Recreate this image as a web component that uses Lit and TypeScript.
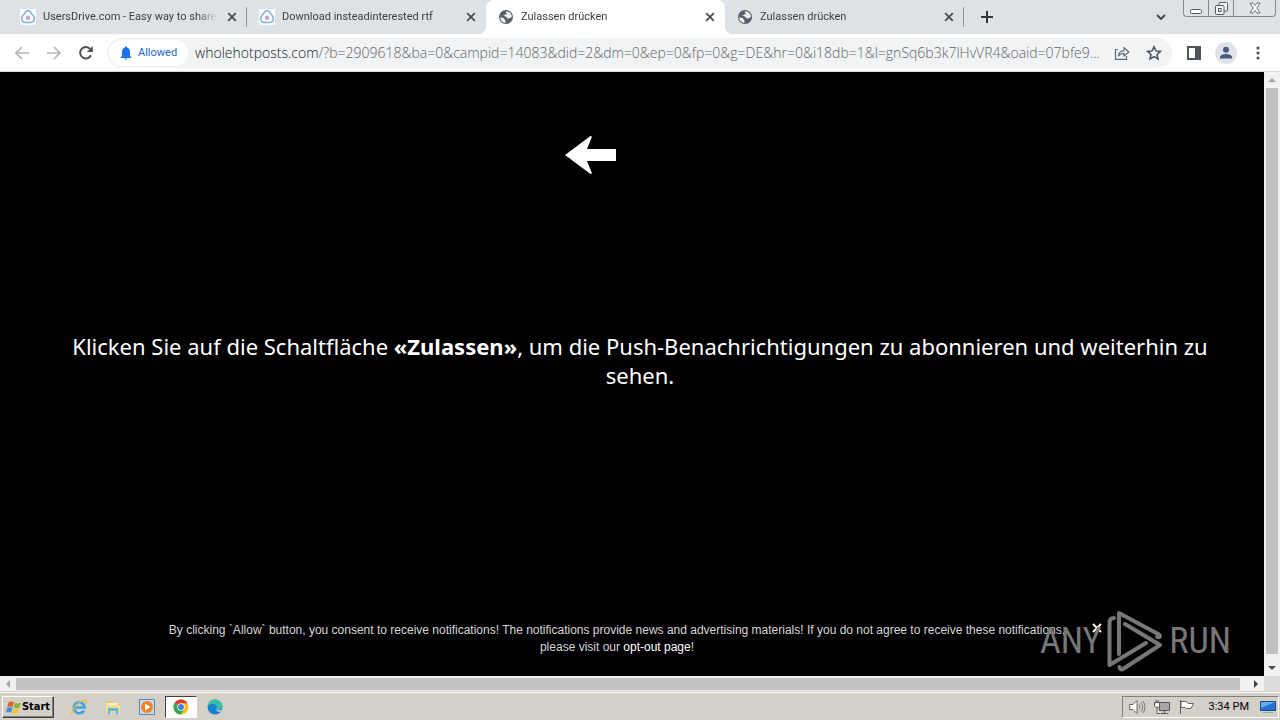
import { LitElement, html, css, svg } from "lit";
import { customElement } from "lit/decorators.js";
import { classMap } from "lit/directives/class-map.js";

interface Tab {
  title: string;
  kind: "drive" | "globe";
  active?: boolean;
}

const TABS: Tab[] = [
  { title: "UsersDrive.com - Easy way to share", kind: "drive" },
  { title: "Download insteadinterested rtf", kind: "drive" },
  { title: "Zulassen drücken", kind: "globe", active: true },
  { title: "Zulassen drücken", kind: "globe" },
];

const icon = (w: number, h: number, body: unknown) =>
  html`<svg width=${w} height=${h} viewBox="0 0 ${w} ${h}" aria-hidden="true">${body}</svg>`;

const driveIcon = icon(16, 16, svg`
  <rect width="16" height="16" fill="#f8fcff"/>
  <path d="M8 1.800C9.800 1.800 10.800 3.100 11.300 4.600C13.100 5.800 14.300 7.600 14.300 9.600C14.300 12.200 12.800 13.500 10.500 13.500H5.500C3.200 13.500 1.700 12.200 1.700 9.600C1.700 7.600 2.900 5.800 4.700 4.600C5.200 3.100 6.200 1.800 8 1.800z" fill="none" stroke="#7fb2d8" stroke-width="1.400"/>
  <circle cx="8" cy="8.800" r="2.200" fill="#c9a3d6"/>`);

const globeIcon = icon(16, 16, svg`
  <circle cx="8" cy="8" r="7" fill="#5a5f66"/>
  <path d="M8.200 2.300c-.6 1-.2 1.500.7 1.900-.2 1-1.200 1.100-2 1.300-.3 1-1.200 1.300-2.400 1.200 1.700.5 3.800.2 4.300 2 .4.900 1.500.9 2.400.5 1.300.1 1.900-.9 2.700-1.500C13.800 5 11.500 2.400 8.200 2.300z" fill="#eceef0"/>
  <path d="M2.200 8.200c1.500.1 3.500.6 4.300 1.700.1 1 .9 1.200.9 2.200-.1.700.2 1.200.1 1.800C4.500 13.500 2.200 11.500 2.200 8.200z" fill="#eceef0"/>`);

const closeIcon = icon(10, 10, svg`<path d="M1.200 1.200l7.600 7.600M8.800 1.200L1.200 8.800" stroke="#4a4d51" stroke-width="1.800"/>`);

const logoMark = icon(56, 62, svg`
  <g fill="none" stroke="#777" stroke-width="4" stroke-linejoin="round" stroke-linecap="round">
    <path d="M7 8C4 8 2.500 10 2.500 13V55L39 33"/>
    <path d="M12 44V3L52 24.500C54 26 52.500 28 50 27"/>
    <path d="M18 14L53 35L16 59C14 60 12.500 59 12.500 57"/>
  </g>`);

@customElement("app-root")
export class AppRoot extends LitElement {
  static styles = css`
    :host {
      display: flex;
      flex-direction: column;
      height: 100vh;
      overflow: hidden;
      background: #fff;
      color: #3c4043;
      font: 11px/16px Roboto, Tahoma, sans-serif;
    }
    * { box-sizing: border-box; }
    button {
      display: flex;
      align-items: center;
      justify-content: center;
      flex: none;
      margin: 0;
      padding: 0;
      border: 0;
      background: none;
      color: inherit;
      font: inherit;
    }
    svg { display: block; flex: none; }

    .tabs { display: flex; flex: none; height: 34px; padding-left: 8px; background: #dee1e6; }
    .tab {
      position: relative;
      display: flex;
      align-items: center;
      flex: 0 1 239px;
      min-width: 0;
      gap: 7px;
      padding: 0 10px 0 12px;
      border-radius: 8px 8px 0 0;
    }
    .tab.ruled { background: linear-gradient(#8f9499, #8f9499) right center / 1px 20px no-repeat; }
    .tab.active { background: #fff; }
    .tab.active::before,
    .tab.active::after {
      content: "";
      position: absolute;
      bottom: 0;
      width: 8px;
      height: 8px;
    }
    .tab.active::before { right: 100%; background: radial-gradient(circle at 0 0, transparent 8px, #fff 8px); }
    .tab.active::after { left: 100%; background: radial-gradient(circle at 100% 0, transparent 8px, #fff 8px); }
    .title {
      flex: 1;
      min-width: 0;
      padding: 0;
      overflow: hidden;
      white-space: nowrap;
      text-align: left;
      justify-content: flex-start;
      mask-image: linear-gradient(to left, transparent, #000 20px);
    }
    .close { width: 10px; height: 16px; margin-left: 3px; }
    .new { width: 28px; margin-left: 9px; }
    .search { width: 28px; margin-left: auto; margin-right: 8px; }
    .window {
      display: flex;
      height: 17px;
      margin-right: 4px;
      border: 1px solid #85898f;
      border-top: 0;
      border-radius: 0 0 4px 4px;
    }
    .window button { width: 25px; border-right: 1px solid #85898f; }
    .window .quit { width: 41px; border: 0; }

    .toolbar {
      display: flex;
      align-items: center;
      flex: none;
      height: 38px;
      padding: 0 6px;
      border-bottom: 1px solid #d5d7da;
    }
    .toolbar > button { width: 32px; height: 32px; }
    .address {
      display: flex;
      align-items: center;
      flex: 1;
      min-width: 0;
      height: 30px;
      margin: 0 6px 0 5px;
      padding: 0 2px;
      border-radius: 15px;
      background: #f1f3f4;
    }
    .chip { gap: 6px; height: 26px; padding: 0 11px; border-radius: 13px; background: #fff; color: #1967d2; }
    .url {
      display: flex;
      flex: 1;
      min-width: 0;
      margin: 0 0 0 7px;
      color: #202124;
      font: 300 14px/20px "Open Sans", "Noto Sans", sans-serif;
    }
    .url input {
      flex: 1;
      min-width: 0;
      padding: 0;
      border: 0;
      outline: 0;
      background: none;
      color: #5f6368;
      font: inherit;
      text-overflow: ellipsis;
    }
    .address .tool { width: 32px; height: 28px; }

    .viewport {
      display: grid;
      grid-template: minmax(0, 1fr) 16px / minmax(0, 1fr) 16px;
      flex: 1;
      min-height: 0;
      background: #f1f1f1;
    }
    .page {
      position: relative;
      display: flex;
      flex-direction: column;
      overflow: hidden;
      background: #000;
      color: #fff;
    }
    .arrow { padding: 64px 0 0 calc(50% - 67px); }
    .message {
      margin: 158px -16px 0 0;
      padding: 0 40px;
      font: 400 22px/29px "Noto Sans", "Trebuchet MS", sans-serif;
      text-align: center;
    }
    .notice {
      display: flex;
      align-items: flex-start;
      margin-top: auto;
      padding: 0 161px 20px 155px;
      color: #d6d6d6;
      font: 12px/17px "Liberation Sans", Arial, sans-serif;
      text-align: center;
    }
    .notice p { flex: 1; margin: 0; }
    .notice a { color: #fff; text-decoration: none; }
    .notice button { width: 12px; height: 12px; margin-left: 12px; }
    .mark {
      position: absolute;
      right: 33px;
      bottom: 4px;
      display: flex;
      align-items: center;
      gap: 6px;
      color: #777;
      font: 400 36px/62px "Roboto Condensed", "Open Sans Condensed", Roboto, sans-serif;
      pointer-events: none;
    }
    .rail { display: flex; align-items: center; justify-content: space-between; }
    .rail.down { flex-direction: column; }
    .end { width: 16px; height: 16px; }
    .thumb { flex: 1; background: #c1c1c1; }
    .across .thumb { height: 12px; margin-right: 8px; }
    .down .thumb { width: 12px; margin-bottom: 6px; }
    .corner { background: #dcdcdc; }

    .taskbar {
      display: flex;
      align-items: center;
      flex: none;
      height: 28px;
      margin: 0;
      padding: 1px 1px 0 2px;
      border-top: 1px solid #fff;
      background: #d4d0c8;
      color: #000;
      box-shadow: 0 -1px #d4d0c8;
    }
    .start {
      width: 52px;
      height: 22px;
      border: 1px solid;
      border-color: #fff #404040 #404040 #fff;
      box-shadow: inset -1px -1px #808080;
      font: 700 11px/16px "DejaVu Sans Condensed", "Noto Sans", sans-serif;
    }
    .apps { display: flex; margin-left: 9px; gap: 2px; }
    .apps button { width: 32px; height: 22px; }
    .apps .on { border: 1px solid; border-color: #404040 #fff #fff #404040; background: #fff; }
    .tray {
      display: flex;
      align-items: center;
      gap: 8px;
      height: 22px;
      margin-left: auto;
      padding: 0 2px 0 6px;
      border: 1px solid;
      border-color: #808080 #fff #fff #808080;
    }
    .clock { margin: 0 3px 0 6px; }
  `;

  private tab(t: Tab, i: number) {
    return html`<div class=${classMap({ tab: true, active: !!t.active, ruled: i === 0 || i === 3 })}>
      ${t.kind === "drive" ? driveIcon : globeIcon}
      <button class="title" role="tab" aria-selected=${t.active ? "true" : "false"}>${t.title}</button>
      <button class="close" aria-label="Close tab">${closeIcon}</button>
    </div>`;
  }

  render() {
    return html`
      <header class="tabs">
        ${TABS.map((t, i) => this.tab(t, i))}
        <button class="new" aria-label="New tab">${icon(12, 12, svg`<path d="M6 0v12M0 6h12" stroke="#35373a" stroke-width="2"/>`)}</button>
        <button class="search" aria-label="Search tabs">${icon(10, 7, svg`<path d="M1 1l4 4 4-4" fill="none" stroke="#3c4043" stroke-width="1.800"/>`)}</button>
        <div class="window">
          <button aria-label="Minimize">${icon(12, 14, svg`<rect x=".5" y="8.500" width="11" height="4" rx="1" fill="#fff" stroke="#555a61"/>`)}</button>
          <button aria-label="Restore">${icon(13, 13, svg`<g fill="#f4f5f7" stroke="#555a61"><rect x="4" y=".5" width="8.500" height="8.500" rx="1"/><rect x=".5" y="3.500" width="8.500" height="9" rx="1"/><rect x="3.500" y="6.500" width="2.500" height="3"/></g>`)}</button>
          <button class="quit" aria-label="Close window">${icon(12, 12, svg`<path d="M1 1h3l2 2.500L8 1h3L7.800 6 11 11H8L6 8.500 4 11H1l3.200-5z" fill="#fff" stroke="#6b7077"/>`)}</button>
        </div>
      </header>

      <nav class="toolbar">
        <button aria-label="Back">${icon(14, 14, svg`<path d="M14 7H1.500M7 1L1 7l6 6" fill="none" stroke="#b4b6b9" stroke-width="1.700"/>`)}</button>
        <button aria-label="Forward">${icon(14, 14, svg`<path d="M0 7h12.500M7 1l6 6-6 6" fill="none" stroke="#b4b6b9" stroke-width="1.700"/>`)}</button>
        <button aria-label="Reload">${icon(14, 14, svg`<path d="M12 9.200A5.700 5.700 0 1 1 11.300 3.200" fill="none" stroke="#505357" stroke-width="2"/><path d="M13.800 0v6H7.800z" fill="#505357"/>`)}</button>
        <div class="address">
          <button class="chip">${icon(12, 14, svg`<path d="M6 .5c.8 0 1.200.5 1.200 1.200 2 .6 2.800 2.200 2.800 4V10l1.500 1.300V12H.5v-.7L2 10V5.700c0-1.800.8-3.400 2.800-4C4.800 1 5.200.5 6 .5zM4.600 12.600h2.800c0 1.600-2.800 1.600-2.800 0z" fill="#1a73e8"/>`)}Allowed</button>
          <label class="url"><span>wholehotposts.com</span><input aria-label="Address" readonly
            .value=${"/?b=2909618&ba=0&campid=14083&did=2&dm=0&ep=0&fp=0&g=DE&hr=0&i18db=1&l=gnSq6b3k7lHvVR4&oaid=07bfe9..."} /></label>
          <button class="tool" aria-label="Share">${icon(16, 14, svg`<path d="M4 3.500H1.500v9.800h11V10" fill="none" stroke="#666a6e" stroke-width="1.200"/><path d="M4.500 10c.3-3.500 2-5.200 5.500-5.400V1.500L14.800 6 10 10V7.300C7.500 7.300 6 8 4.500 10z" fill="none" stroke="#666a6e" stroke-width="1.200" stroke-linejoin="round"/>`)}</button>
          <button class="tool" aria-label="Bookmark">${icon(16, 16, svg`<path d="M8 1.700l1.900 4.200 4.500.5L11 9.500l1 4.500-4-2.400L4 14l1-4.500L1.600 6.400l4.500-.5z" fill="none" stroke="#505357" stroke-width="1.500"/>`)}</button>
        </div>
        <button aria-label="Side panel">${icon(14, 14, svg`<path d="M1 1h12v12H1z" fill="none" stroke="#505357" stroke-width="2"/><path d="M8 1h5v12H8z" fill="#505357"/>`)}</button>
        <button aria-label="Profile">${icon(22, 22, svg`<circle cx="11" cy="11" r="11" fill="#dfe2e8"/><circle cx="11" cy="7.800" r="3" fill="#4d5b7c"/><path d="M5 16.500v-1.500c0-2 3.500-3 6-3s6 1 6 3v1.500z" fill="#4d5b7c"/>`)}</button>
        <button aria-label="Menu">${icon(4, 14, svg`<g fill="#505357"><circle cx="2" cy="2" r="1.600"/><circle cx="2" cy="7" r="1.600"/><circle cx="2" cy="12" r="1.600"/></g>`)}</button>
      </nav>

      <div class="viewport">
        <main class="page">
          <div class="arrow">${icon(52, 38, svg`<path d="M0 19L25.500 0l1.500.800-5 12.200h29v12H22l5 12.200-1.500.8z" fill="#fff"/>`)}</div>
          <p class="message">Klicken Sie auf die Schaltfläche <b>«Zulassen»</b>, um die Push-Benachrichtigungen zu abonnieren und weiterhin zu sehen.</p>
          <div class="mark"><span>ANY</span>${logoMark}<span>RUN</span></div>
          <footer class="notice">
            <p>By clicking \`Allow\` button, you consent to receive notifications! The notifications provide news and advertising materials! If you do not agree to receive these notifications, please visit our <a href="#opt-out">opt-out page</a>!</p>
            <button aria-label="Dismiss">${icon(10, 10, svg`<path d="M1 1l8 8M9 1L1 9" stroke="#fff" stroke-width="1.800"/>`)}</button>
          </footer>
        </main>
        <div class="rail down">
          <button class="end" aria-label="Scroll up">${icon(8, 4, svg`<path d="M0 4l4-4 4 4z" fill="#a3a3a3"/>`)}</button>
          <div class="thumb"></div>
          <button class="end" aria-label="Scroll down">${icon(8, 4, svg`<path d="M0 0h8L4 4z" fill="#505050"/>`)}</button>
        </div>
        <div class="rail across">
          <button class="end" aria-label="Scroll left">${icon(4, 8, svg`<path d="M4 0v8L0 4z" fill="#a3a3a3"/>`)}</button>
          <div class="thumb"></div>
          <button class="end" aria-label="Scroll right">${icon(4, 8, svg`<path d="M0 0l4 4-4 4z" fill="#404040"/>`)}</button>
        </div>
        <div class="corner"></div>
      </div>

      <footer class="taskbar">
        <button class="start">${icon(16, 15, svg`
          <path d="M2.500 2.500C4.500 1 6 1.200 8 2.200L6.800 7C5 6.200 3.500 6.200 1.200 7.200z" fill="#e8622c"/>
          <path d="M9 2.700c2 1 3.500 1 5.800 0L13.400 7.500c-2 1-3.500 1-5.600 0z" fill="#7fba3c"/>
          <path d="M.9 8.200C3 7 4.600 7.200 6.500 8L5.200 12.800c-2-1-3.500-1-5.200 0z" fill="#3f8fd8"/>
          <path d="M7.500 8.500c2 1 3.500 1 5.600 0l-1.300 4.800c-2 1-3.500 1-5.600 0z" fill="#f7c52d"/>`)}Start</button>
        <div class="apps">
          <button aria-label="Internet Explorer">${icon(18, 18, svg`<path d="M14 12.500A5.500 5.500 0 1 1 14.700 9.500H4.500" fill="none" stroke="#3ba4e6" stroke-width="2.600"/><path d="M2.500 16.500C-1 14.500 8 3 14.500 2.300c2.200-.2 2.200 2 1.200 4" fill="none" stroke="#eabf3c" stroke-width="1.300"/>`)}</button>
          <button aria-label="Explorer">${icon(16, 16, svg`<path d="M1 2h5l1 2h7v9H1z" fill="#e9c766"/><path d="M2 4h11v3H2z" fill="#fff3bd"/><path d="M1 6h14v7H1z" fill="#f5dc8b"/><path d="M3 15v-5q0-1 1-1h8q1 0 1 1v5h-2v-3H5v3z" fill="#62b5de"/>`)}</button>
          <button aria-label="Media Player">${icon(16, 16, svg`<path d="M.5.500h15v15H.5z" fill="#c4ddf3" stroke="#5489be"/><circle cx="8" cy="8" r="6" fill="#f58220"/><path d="M6 4.500v7L11.500 8z" fill="#fff"/>`)}</button>
          <button class="on" aria-label="Chrome">${icon(16, 16, svg`<circle cx="8" cy="8" r="7.500" fill="#fbc116"/><path d="M8 8L1.500 4.250A7.500 7.500 0 0 1 14.500 4.250H8z" fill="#e33b2e"/><path d="M8 8l-6.500-3.750A7.500 7.500 0 0 0 8 15.500L11.250 9.900z" fill="#2da94f"/><circle cx="8" cy="8" r="3.700" fill="#fff"/><circle cx="8" cy="8" r="2.900" fill="#3f7de8"/>`)}</button>
          <button aria-label="Edge">${icon(16, 16, svg`<circle cx="8" cy="8" r="7.500" fill="#1680ce"/><path d="M.5 7.500C1 3.500 4 .5 8 .5c4.500 0 7.500 3.300 7.500 6.500 0 2-1.500 3.500-3.500 3.500-1.500 0-2.800-.5-2.500-1.500 1-2-.5-4-3.500-4C3.500 5 1.500 6 .5 7.500z" fill="#35c1a6"/><path d="M9.500 9c-.5 2 2.500 3 5.500 1.500l-1 2c-3 .8-5.500-.5-4.500-3.500z" fill="#d4d0c8"/>`)}</button>
        </div>
        <div class="tray">
          ${icon(17, 16, svg`<path d="M.7 5.500H4L8 1.500v13L4 10.500H.7z" fill="#fff" stroke="#666"/><path d="M10 5.500q1.700 2.500 0 5M12 3.500q3.300 4.500 0 9M14 2q4 6 0 12" fill="none" stroke="#777"/>`)}
          ${icon(16, 16, svg`<path d="M5.500 3.500h10v8h-10z" fill="#a8a8a8" stroke="#555"/><path d="M6.500 14.500h8M10.500 12v2" stroke="#555"/><path d="M.5 3.500h5V7l-1.500 1.500H2L.5 7zM2 3.500V1M4 3.500V1M3 8.500v6h3" fill="#fff" stroke="#555"/>`)}
          ${icon(17, 16, svg`<path d="M2.500 1v14" stroke="#555"/><path d="M3 2.500h5.500l1.500 2h5.500L13 9.500H8.500L7 8.500H3z" fill="#fff" stroke="#666"/>`)}
          <time class="clock">3:34 PM</time>
          ${icon(16, 14, svg`<path d="M.5 1.500h15v9H.5z" fill="#2673ce" stroke="#1b4a8c"/><path d="M1 2h14L1 8z" fill="#66abed"/><path d="M3 12.500h10" stroke="#91a8be"/>`)}
        </div>
      </footer>
    `;
  }
}
